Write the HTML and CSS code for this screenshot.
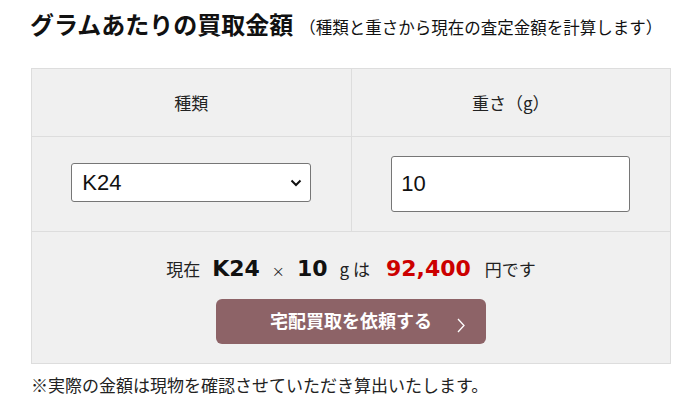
FILE: index.html
```html
<!DOCTYPE html>
<html lang="ja">
<head>
    <meta charset="utf-8">
    <title>グラムあたりの買取金額</title>
    <link rel="stylesheet" href="styles.css">
</head>
<body>
    <div class="wrap">
        <h2 class="title">グラムあたりの買取金額<span class="sub">（種類と重さから現在の査定金額を計算します）</span></h2>

        <table class="calc">
            <tr>
                <th>種類</th>
                <th>重さ（g）</th>
            </tr>
            <tr class="inputs">
                <td>
                    <span class="select-box">
                        <select class="kind">
                            <option>K24</option>
                            <option>K22</option>
                            <option>K18</option>
                        </select>
                        <svg class="caret" width="12" height="8" viewBox="0 0 12 8"><polyline points="1.5,1.5 6,6 10.5,1.5" fill="none" stroke="#111" stroke-width="2"/></svg>
                    </span>
                </td>
                <td>
                    <input type="text" class="weight" value="10">
                </td>
            </tr>
            <tr>
                <td colspan="2" class="result">
                    <p class="line">現在<b class="num">K24</b><span class="x">×</span><b class="num">10</b>g は<b class="num price">92,400</b>円です</p>
                    <a href="#" class="btn">宅配買取を依頼する
                        <svg class="arrow" width="10" height="16" viewBox="0 0 10 16"><polyline points="2,2 8,8.5 2,15" fill="none" stroke="#fff" stroke-width="1.3"/></svg>
                    </a>
                </td>
            </tr>
        </table>

        <p class="note">※実際の金額は現物を確認させていただき算出いたします。</p>
    </div>
</body>
</html>
```

FILE: styles.css
```css
body {
    margin: 0;
    background-color: #ffffff;
    color: #222222;
    font-family: "Noto Sans CJK JP", "Liberation Sans", sans-serif;
    font-size: 17px;
}
.wrap {
    padding: 0 26px 0 31px;
}
.title {
    margin: 6px 0 0 -1px;
    font-size: 24px;
    line-height: 36px;
    font-weight: bold;
    color: #111111;
}
.title .sub {
    font-size: 16.5px;
    font-weight: normal;
    margin-left: 6px;
}
.calc {
    margin-top: 23px;
    width: 640px;
    border-collapse: collapse;
    background-color: #f0f0f0;
}
.calc th, .calc td {
    border: 1px solid #dddddd;
    text-align: center;
    padding: 0;
}
.calc th {
    width: 50%;
    height: 67px;
    font-weight: normal;
    font-size: 17px;
}
.inputs td {
    height: 94px;
}
.select-box {
    position: relative;
    display: inline-block;
    margin-top: -3px;
    vertical-align: middle;
}
.kind {
    display: block;
    width: 240px;
    height: 39px;
    padding: 0 30px 0 10px;
    font-family: "Liberation Sans", sans-serif;
    font-size: 22px;
    color: #111111;
    background-color: #ffffff;
    border: 1px solid #767676;
    border-radius: 3px;
    appearance: none;
    -webkit-appearance: none;
}
.caret {
    position: absolute;
    right: 9px;
    top: 16px;
    pointer-events: none;
}
.weight {
    box-sizing: border-box;
    width: 239px;
    height: 56px;
    padding: 0 9px;
    font-family: "Liberation Sans", sans-serif;
    font-size: 22px;
    color: #111111;
    border: 1px solid #767676;
    border-radius: 3px;
    vertical-align: middle;
}
.result {
    padding: 25px 0 19px !important;
}
.line {
    margin: 0;
    height: 24px;
    line-height: 24px;
    font-size: 17px;
}
.num {
    font-family: "DejaVu Sans", sans-serif;
    font-size: 22px;
    line-height: 1;
    margin: 0 12px;
    color: #111111;
}
.price {
    color: #cc0000;
    margin: 0 14px 0 16px;
}
.x {
    font-size: 13px;
}
.btn {
    position: relative;
    display: block;
    width: 270px;
    height: 45px;
    margin: 18px auto 0;
    background-color: #8d6367;
    border-radius: 6px;
    color: #ffffff;
    font-size: 18px;
    font-weight: bold;
    line-height: 43px;
    text-decoration: none;
}
.arrow {
    position: absolute;
    left: 240px;
    top: 18px;
}
.note {
    margin: 9px 0 0;
    font-size: 17px;
    line-height: 24px;
}
```
